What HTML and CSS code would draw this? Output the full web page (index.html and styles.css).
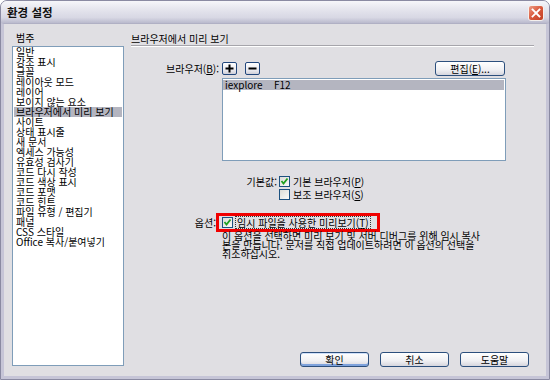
FILE: index.html
```html
<!DOCTYPE html>
<html lang="ko">
<head>
    <meta charset="UTF-8">
    <title>환경 설정</title>
    <link rel="stylesheet" href="styles.css">
</head>
<body>
    <div class="window">
        <div class="titlebar">
            <span class="title">환경 설정</span>
            <span class="close">
                <svg width="16" height="16" viewBox="0 0 16 16">
                    <path d="M4.5 4.5 L11.5 11.5 M11.5 4.5 L4.5 11.5" stroke="#fff" stroke-width="1.8" stroke-linecap="square"/>
                </svg>
            </span>
        </div>

        <div class="client">
            <!-- 범주 목록 -->
            <div class="cat-col">
                <div class="cat-label">범주</div>
                <ul class="cat-list">
                    <li>일반</li>
                    <li>강조 표시</li>
                    <li>글꼴</li>
                    <li>레이아웃 모드</li>
                    <li>레이어</li>
                    <li>보이지 않는 요소</li>
                    <li class="sel">브라우저에서 미리 보기</li>
                    <li>사이트</li>
                    <li>상태 표시줄</li>
                    <li>새 문서</li>
                    <li>엑세스 가능성</li>
                    <li>유효성 검사기</li>
                    <li>코드 다시 작성</li>
                    <li>코드 색상 표시</li>
                    <li>코드 포맷</li>
                    <li>코드 힌트</li>
                    <li>파일 유형 / 편집기</li>
                    <li>패널</li>
                    <li>CSS 스타일</li>
                    <li>Office 복사/붙여넣기</li>
                </ul>
            </div>

            <!-- 설정 영역 -->
            <div class="main-col">
                <div class="section-title">브라우저에서 미리 보기</div>

                <div class="browser-row">
                    <span class="field-label">브라우저(<u>B</u>):</span>
                    <button class="tool-btn">
                        <svg width="9" height="9" viewBox="0 0 9 9"><path d="M4.5 0.5 V8.5 M0.5 4.5 H8.5" stroke="#000" stroke-width="2"/></svg>
                    </button>
                    <button class="tool-btn minus">
                        <svg width="9" height="9" viewBox="0 0 9 9"><path d="M0.5 4.5 H8.5" stroke="#000" stroke-width="2"/></svg>
                    </button>
                    <button class="btn edit-btn">편집(<u>E</u>)...</button>
                </div>

                <div class="browser-list">
                    <div class="browser-item sel">
                        <span class="b-name">iexplore</span>
                        <span>F12</span>
                    </div>
                </div>

                <div class="check-group">
                    <div class="check-row">
                        <span class="group-label">기본값:</span>
                        <span class="checkbox checked">
                            <svg width="9" height="9" viewBox="0 0 9 9"><path d="M1.5 4 L3.5 6.5 L7.5 1.5" fill="none" stroke="#21a121" stroke-width="1.8"/></svg>
                        </span>
                        <span>기본 브라우저(<u>P</u>)</span>
                    </div>
                    <div class="check-row">
                        <span class="group-label"></span>
                        <span class="checkbox"></span>
                        <span>보조 브라우저(<u>S</u>)</span>
                    </div>
                </div>

                <div class="option-row">
                    <span class="option-label">옵션:</span>
                    <div class="highlight">
                        <span class="checkbox checked">
                            <svg width="9" height="9" viewBox="0 0 9 9"><path d="M1.5 4 L3.5 6.5 L7.5 1.5" fill="none" stroke="#21a121" stroke-width="1.8"/></svg>
                        </span>
                        <span class="focus-text">임시 파일을 사용한 미리보기(<u>T</u>)</span>
                    </div>
                </div>

                <p class="option-desc">
                    이 옵션을 선택하면 미리 보기 및 서버 디버그를 위해 임시 복사<br>
                    본을 만듭니다. 문서를 직접 업데이트하려면 이 옵션의 선택을<br>
                    취소하십시오.
                </p>

                <div class="dialog-buttons">
                    <button class="btn default">확인</button>
                    <button class="btn">취소</button>
                    <button class="btn">도움말</button>
                </div>
            </div>
        </div>
    </div>
</body>
</html>
```

FILE: styles.css
```css
/* 페이지 */
body {
    margin: 0;
    font-family: "Noto Sans CJK KR", "DejaVu Sans", sans-serif;
    font-size: 10px;
    color: #000;
}

/* 창 틀 */
.window {
    width: 550px;
    height: 380px;
    box-sizing: border-box;
    border: 1px solid #8a8aa2;
    border-radius: 7px 7px 0 0;
    display: flex;
    flex-direction: column;
    background-color: #e0dfe3;
    overflow: hidden;
}

/* 제목 표시줄 */
.titlebar {
    height: 22px;
    flex: none;
    display: flex;
    align-items: center;
    padding: 0 5px 0 6px;
    background: linear-gradient(#f6f6fa, #e6e6ee 35%, #d8d8e4 75%, #babacd);
}

.title {
    font-size: 11.5px;
    font-weight: bold;
    color: #111;
}

.close {
    margin-left: auto;
    margin-top: 2px;
    width: 16px;
    height: 16px;
    box-sizing: border-box;
    border: 1px solid #f4f0ee;
    border-radius: 3px;
    background: linear-gradient(135deg, #ec9b85, #d9583b 50%, #c23f24);
    display: flex;
    align-items: center;
    justify-content: center;
}

.close svg {
    margin: -1px;
}

/* 클라이언트 영역 */
.client {
    flex: 1;
    display: flex;
    gap: 7px;
    border: 3px solid #c6c5d7;
    border-top: 1px solid #b0b0c4;
    padding: 8px 12px 9px 8px;
}

/* 범주 */
.cat-col {
    width: 112px;
    display: flex;
    flex-direction: column;
}

.cat-label {
    height: 12px;
    line-height: 12px;
    padding-left: 4px;
}

.cat-list {
    flex: 1;
    list-style: none;
    margin: 2px 0 1px 0;
    padding: 0 1px;
    background-color: #fff;
    border: 1px solid #7f9db9;
}

.cat-list li {
    height: 10px;
    line-height: 10px;
    padding-left: 2px;
    white-space: nowrap;
}

.cat-list li.sel {
    background-color: #b4b5c0;
}

/* 설정 영역 */
.main-col {
    flex: 1;
    display: flex;
    flex-direction: column;
}

.section-title {
    height: 13px;
    line-height: 13px;
    border-bottom: 1px solid #a6a5ab;
    box-shadow: 0 1px 0 #fff;
}

.browser-row {
    margin-top: 14px;
    height: 16px;
    display: flex;
    align-items: center;
}

.field-label {
    width: 88px;
    text-align: right;
    margin-right: 3px;
}

.tool-btn {
    width: 15px;
    height: 13px;
    padding: 0;
    margin-right: 8px;
    border: 1px solid #21467c;
    border-radius: 2px;
    background: linear-gradient(#ffffff, #e6e6ec 70%, #cfcfd8);
    display: flex;
    align-items: center;
    justify-content: center;
}

.btn {
    height: 15px;
    width: 69px;
    padding: 0;
    border: 1px solid #2c4f7d;
    border-radius: 3px;
    background: linear-gradient(#ffffff, #f0f0f3 60%, #d6d6de);
    font-family: inherit;
    font-size: 10px;
    line-height: 13px;
    color: #000;
}

.btn.default {
    box-shadow: inset 0 -2px 0 #7ea2dc, inset 0 1px 0 #cfe0fa;
}

.edit-btn {
    margin-left: auto;
    margin-right: 29px;
    width: 70px;
}

.browser-list {
    margin: 2px 28px 0 91px;
    height: 83px;
    box-sizing: border-box;
    border: 1px solid #7f9db9;
    background-color: #fff;
    padding: 1px 1px 0 0;
}

.browser-item {
    height: 10px;
    line-height: 10px;
    padding-left: 2px;
    display: flex;
}

.browser-item.sel {
    background-color: #b4b5c0;
}

.b-name {
    width: 49px;
}

/* 체크박스 */
.check-group {
    margin-top: 14px;
}

.check-row {
    height: 13px;
    display: flex;
    align-items: center;
}

.group-label {
    width: 146px;
    text-align: right;
    margin-right: 2px;
}

.checkbox {
    width: 11px;
    height: 11px;
    box-sizing: border-box;
    border: 1px solid #1c5180;
    background: linear-gradient(135deg, #dcdcd7, #fbfbf9);
    margin-right: 3px;
    display: flex;
    align-items: center;
    justify-content: center;
    flex: none;
}

.option-row {
    margin-top: 12px;
    height: 19px;
    display: flex;
    align-items: center;
}

.option-label {
    width: 85px;
    text-align: right;
}

.highlight {
    width: 164px;
    height: 19px;
    box-sizing: border-box;
    border: 3px solid #f00000;
    padding-left: 3px;
    display: flex;
    align-items: center;
}

.focus-text {
    outline: 1px dotted #333;
    line-height: 11px;
    padding: 0 1px;
}

.option-desc {
    margin: -1px 0 0 91px;
    line-height: 9px;
    white-space: nowrap;
}

/* 하단 버튼 */
.dialog-buttons {
    margin-top: auto;
    display: flex;
    justify-content: flex-end;
    gap: 11px;
    padding-right: 5px;
}
```
